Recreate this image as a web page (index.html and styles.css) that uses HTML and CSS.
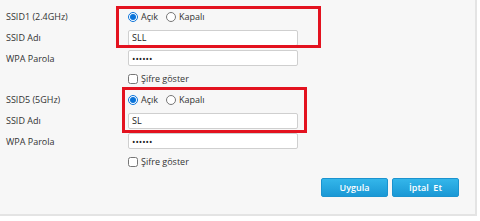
FILE: index.html
```html
<!DOCTYPE html>
<html lang="tr">
<head>
    <meta charset="UTF-8">
    <title>Kablosuz Ayarlar</title>
    <link rel="stylesheet" href="styles.css">
</head>
<body>
    <div class="panel">
        <!-- SSID1 -->
        <div class="group">
            <div class="row">
                <span class="label">SSID1 (2.4GHz)</span>
                <div class="field">
                    <label class="opt"><input type="radio" name="s1" checked> Açık</label>
                    <label class="opt"><input type="radio" name="s1"> Kapalı</label>
                </div>
            </div>
            <div class="row">
                <span class="label">SSID Adı</span>
                <div class="field"><input class="text" type="text" value="SLL"></div>
            </div>
            <div class="row short">
                <span class="label">WPA Parola</span>
                <div class="field"><input class="text" type="password" value="123456"></div>
            </div>
            <div class="row">
                <span class="label"></span>
                <div class="field"><label class="opt"><input type="checkbox"> Şifre göster</label></div>
            </div>
            <div class="mark mark-1"></div>
        </div>

        <!-- SSID5 -->
        <div class="group">
            <div class="row">
                <span class="label">SSID5 (5GHz)</span>
                <div class="field">
                    <label class="opt"><input type="radio" name="s5" checked> Açık</label>
                    <label class="opt"><input type="radio" name="s5"> Kapalı</label>
                </div>
            </div>
            <div class="row">
                <span class="label">SSID Adı</span>
                <div class="field"><input class="text" type="text" value="SL"></div>
            </div>
            <div class="row short">
                <span class="label">WPA Parola</span>
                <div class="field"><input class="text" type="password" value="123456"></div>
            </div>
            <div class="row">
                <span class="label"></span>
                <div class="field"><label class="opt"><input type="checkbox"> Şifre göster</label></div>
            </div>
            <div class="mark mark-2"></div>
        </div>

        <div class="buttons">
            <button class="btn">Uygula</button>
            <button class="btn">İptal&nbsp; Et</button>
        </div>
    </div>
</body>
</html>
```

FILE: styles.css
```css
* {
    margin: 0;
    padding: 0;
    box-sizing: border-box;
}

body {
    font-family: "Open Sans", "Noto Sans", sans-serif;
    font-size: 9px;
    color: #333;
    background: #fff;
}

.panel {
    width: 477px;
    height: 216px;
    background: #f7f7f7;
    border-right: 2px solid #e4e4e4;
    border-bottom: 2px solid #e4e4e4;
    padding-top: 6px;
}

.group {
    position: relative;
}

.row {
    display: flex;
    align-items: center;
    height: 21px;
}

.row.short {
    height: 20px;
}

.label {
    width: 128px;
    padding-left: 6px;
}

.field {
    display: flex;
    align-items: center;
    gap: 8px;
}

.opt {
    display: flex;
    align-items: center;
    gap: 3px;
}

.opt input {
    width: 10px;
    height: 10px;
    accent-color: #0a73d9;
}

.text {
    width: 170px;
    height: 16px;
    border: 1px solid #cfcfcf;
    border-radius: 2px;
    background: #fff;
    padding: 0 3px;
    font-family: inherit;
    font-size: 9px;
    color: #222;
}

.mark {
    position: absolute;
    border: 3px solid #e3121f;
}

.mark-1 {
    left: 116px;
    top: 0;
    width: 205px;
    height: 42px;
}

.mark-2 {
    left: 122px;
    top: -2px;
    width: 185px;
    height: 46px;
}

.buttons {
    display: flex;
    justify-content: flex-end;
    gap: 4px;
    margin-top: 6px;
    padding-right: 16px;
}

.btn {
    width: 67px;
    height: 19px;
    border: 1px solid #1b93cf;
    border-radius: 2px;
    background: linear-gradient(#34b6ea, #1a98d5);
    color: #fff;
    font-family: inherit;
    font-size: 9px;
    font-weight: 600;
}
```
